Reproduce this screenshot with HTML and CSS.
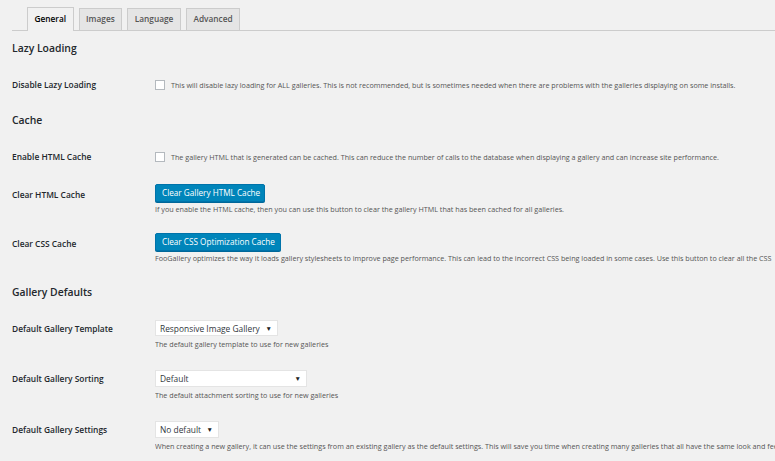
FILE: index.html
```html
<!DOCTYPE html>
<html>
<head>
<meta charset="utf-8">
<link rel="stylesheet" href="styles.css">
</head>
<body>
<div class="wrap">
  <nav class="tabs">
    <a class="tab active">General</a>
    <a class="tab">Images</a>
    <a class="tab">Language</a>
    <a class="tab">Advanced</a>
  </nav>

  <h2 class="section s-lazy">Lazy Loading</h2>
  <div class="row r-lazy">
    <div class="label">Disable Lazy Loading</div>
    <div class="field inline"><span class="check"></span><span class="desc">This will disable lazy loading for ALL galleries. This is not recommended, but is sometimes needed when there are problems with the galleries displaying on some installs.</span></div>
  </div>

  <h2 class="section s-cache">Cache</h2>
  <div class="row r-enable">
    <div class="label">Enable HTML Cache</div>
    <div class="field inline"><span class="check"></span><span class="desc">The gallery HTML that is generated can be cached. This can reduce the number of calls to the database when displaying a gallery and can increase site performance.</span></div>
  </div>
  <div class="row r-btn">
    <div class="label lbtn">Clear HTML Cache</div>
    <div class="field">
      <button class="btn b-html">Clear Gallery HTML Cache</button>
      <p class="desc under">If you enable the HTML cache, then you can use this button to clear the gallery HTML that has been cached for all galleries.</p>
    </div>
  </div>
  <div class="row r-btn">
    <div class="label lbtn">Clear CSS Cache</div>
    <div class="field">
      <button class="btn b-css">Clear CSS Optimization Cache</button>
      <p class="desc under">FooGallery optimizes the way it loads gallery stylesheets to improve page performance. This can lead to the incorrect CSS being loaded in some cases. Use this button to clear all the CSS</p>
    </div>
  </div>

  <h2 class="section s-defaults">Gallery Defaults</h2>
  <div class="row r-sel first">
    <div class="label lsel">Default Gallery Template</div>
    <div class="field">
      <div class="select w-template"><span>Responsive Image Gallery</span><span class="arrow">▼</span></div>
      <p class="desc under2">The default gallery template to use for new galleries</p>
    </div>
  </div>
  <div class="row r-sel">
    <div class="label lsel">Default Gallery Sorting</div>
    <div class="field">
      <div class="select w-sort"><span>Default</span><span class="arrow">▼</span></div>
      <p class="desc under2">The default attachment sorting to use for new galleries</p>
    </div>
  </div>
  <div class="row r-sel">
    <div class="label lsel">Default Gallery Settings</div>
    <div class="field">
      <div class="select w-settings"><span>No default</span><span class="arrow">▼</span></div>
      <p class="desc under2">When creating a new gallery, it can use the settings from an existing gallery as the default settings. This will save you time when creating many galleries that all have the same look and feel.</p>
    </div>
  </div>
</div>
</body>
</html>
```

FILE: styles.css
```css
html, body {
  margin: 0;
  padding: 0;
  overflow: hidden;
  background: #f1f1f1;
}
body {
  font-family: "Open Sans", "Noto Sans", sans-serif;
  color: #23282d;
  width: 775px;
  height: 461px;
}
.wrap {
  padding-left: 12px;
}
.tabs {
  display: flex;
  align-items: flex-end;
  gap: 5px;
  padding-left: 15px;
  padding-top: 7px;
  border-bottom: 1px solid #ccc;
  height: 23px;
  box-sizing: content-box;
}
.tab {
  display: block;
  height: 22px;
  box-sizing: border-box;
  border: 1px solid #ccc;
  border-bottom: none;
  background: #e5e5e5;
  color: #555;
  font-size: 8.3px;
  font-weight: 600;
  line-height: 20px;
  padding: 0 6.5px;
  white-space: nowrap;
}
.tab.active {
  background: #f1f1f1;
  color: #000;
  height: 24px;
  margin-bottom: -1px;
  line-height: 22px;
}
.section {
  margin: 0;
  font-size: 10.4px;
  font-weight: 600;
  line-height: 16px;
  color: #23282d;
}
.s-lazy { margin-top: 9px; }
.s-cache { margin-top: 19px; }
.s-defaults { margin-top: 21px; }

.row {
  display: grid;
  grid-template-columns: 143px 1fr;
  align-items: start;
  white-space: nowrap;
}
.field {
  min-width: 0;
  overflow: hidden;
}
.label {
  font-size: 8.4px;
  font-weight: 600;
  line-height: 16px;
  color: #23282d;
}
.r-lazy, .r-enable { margin-top: 21px; }
.r-btn { margin-top: 19px; }
.r-sel { margin-top: 21px; }
.r-sel.first { margin-top: 20px; }
.lbtn { padding-top: 3px; }
.lsel { padding-top: 1px; }

.field.inline {
  display: flex;
  align-items: center;
  height: 16px;
}
.check {
  width: 10px;
  height: 10px;
  box-sizing: border-box;
  border: 1px solid #b4b9be;
  background: #fff;
  margin-right: 6px;
  flex: none;
}
.desc {
  font-size: 7.2px;
  line-height: 10px;
  color: #555;
  margin: 0;
}
.under { margin-top: 2px; }
.under2 { margin-top: 3px; }

.btn {
  display: block;
  height: 18px;
  box-sizing: border-box;
  border: 1px solid #0073aa;
  background: #0085ba;
  color: #fff;
  font-family: "Open Sans", "Noto Sans", sans-serif;
  font-size: 8.2px;
  line-height: 16px;
  padding: 0 6px;
  border-radius: 2px;
  box-shadow: 0 1px 0 #006799;
}
.b-html { width: 110px; }
.b-css { width: 126px; }

.select {
  display: flex;
  align-items: center;
  justify-content: space-between;
  height: 16px;
  box-sizing: border-box;
  background: #fff;
  border: 1px solid #e4e4e4;
  padding: 0 5px 0 4px;
  font-size: 8.4px;
  color: #32373c;
}
.arrow {
  font-size: 6.5px;
  color: #222;
}
.w-template { width: 123px; }
.w-sort { width: 152px; height: 17px; }
.w-settings { width: 64px; height: 17px; }
```
